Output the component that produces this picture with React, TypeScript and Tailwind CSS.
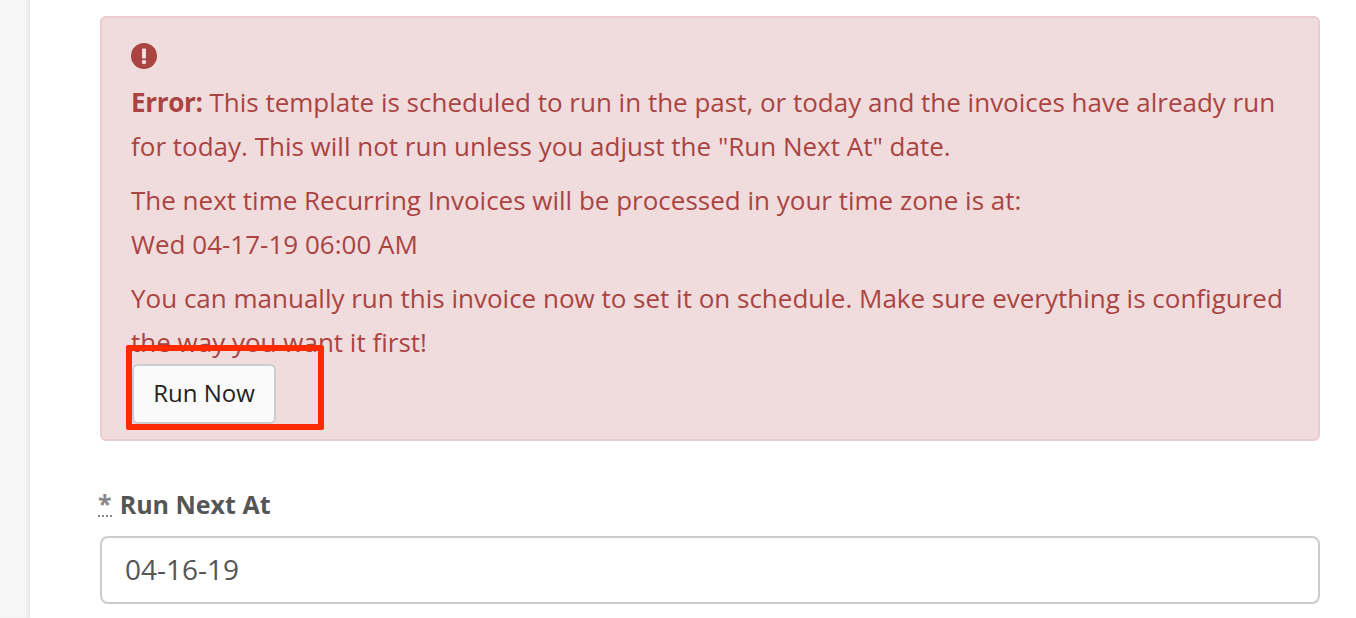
export default function App() {
  return (
    <div className="flex h-[618px] overflow-hidden bg-white font-['Open_Sans',sans-serif] text-[26px]">
      <div className="w-[30px] shrink-0 bg-[#f7f7f7] shadow-[inset_-4px_0_4px_-2px_rgba(0,0,0,0.08)]" />
      <div className="w-[1220px] ml-[70px] pt-4">
        <div className="relative h-[425px] rounded-[6px] border-2 border-[#ebccd1] bg-[#f1dcdd] pl-[29px] pt-[25px] text-[#a94442]">
          <svg viewBox="0 0 26 26" className="w-[26px] h-[26px]">
            <circle cx="13" cy="13" r="13" fill="#a94442" />
            <rect x="11" y="5.5" width="4" height="10" rx="1" fill="#f2dede" />
            <circle cx="13" cy="19" r="2.2" fill="#f2dede" />
          </svg>
          <p className="leading-[44px] mt-[11px] w-[1170px]">
            <strong className="font-bold tracking-[-0.3px]">Error:</strong> This template is scheduled to run in the past, or today and the invoices have already run for today. This will not run unless you adjust the "Run Next At" date.
          </p>
          <p className="leading-[44px] mt-[10px]">
            The next time Recurring Invoices will be processed in your time zone is at:
            <br />
            Wed 04-17-19 06:00 AM
          </p>
          <p className="leading-[44px] mt-[10px] w-[1170px]">
            You can manually run this invoice now to set it on schedule. Make sure everything is configured the way you want it first!
          </p>
          <button className="flex items-center justify-center w-[144px] h-[60px] ml-[1px] pb-[2px] rounded-[6px] border-2 border-[#cccccc] bg-[#fafafa] text-[#222222] text-[24px]">
            Run Now
          </button>
          <div className="absolute left-[24px] top-[327px] w-[198px] h-[85px] border-[6px] border-[#ff2a00] rounded-[2px]" />
        </div>
        <div className="mt-[41px] flex items-center font-bold text-[#555555] text-[25px] leading-[44px]">
          <span className="text-[#888888] border-b-2 border-dotted border-[#888888] leading-[24px] mr-[8px] ml-[-2px]">*</span>
          Run Next At
        </div>
        <div className="mt-[10px] h-[68px] rounded-[8px] border-2 border-[#cccccc] bg-white flex items-center pl-[23px] pb-[2px] text-[#555555] text-[28px]">
          04-16-19
        </div>
      </div>
    </div>
  )
}
